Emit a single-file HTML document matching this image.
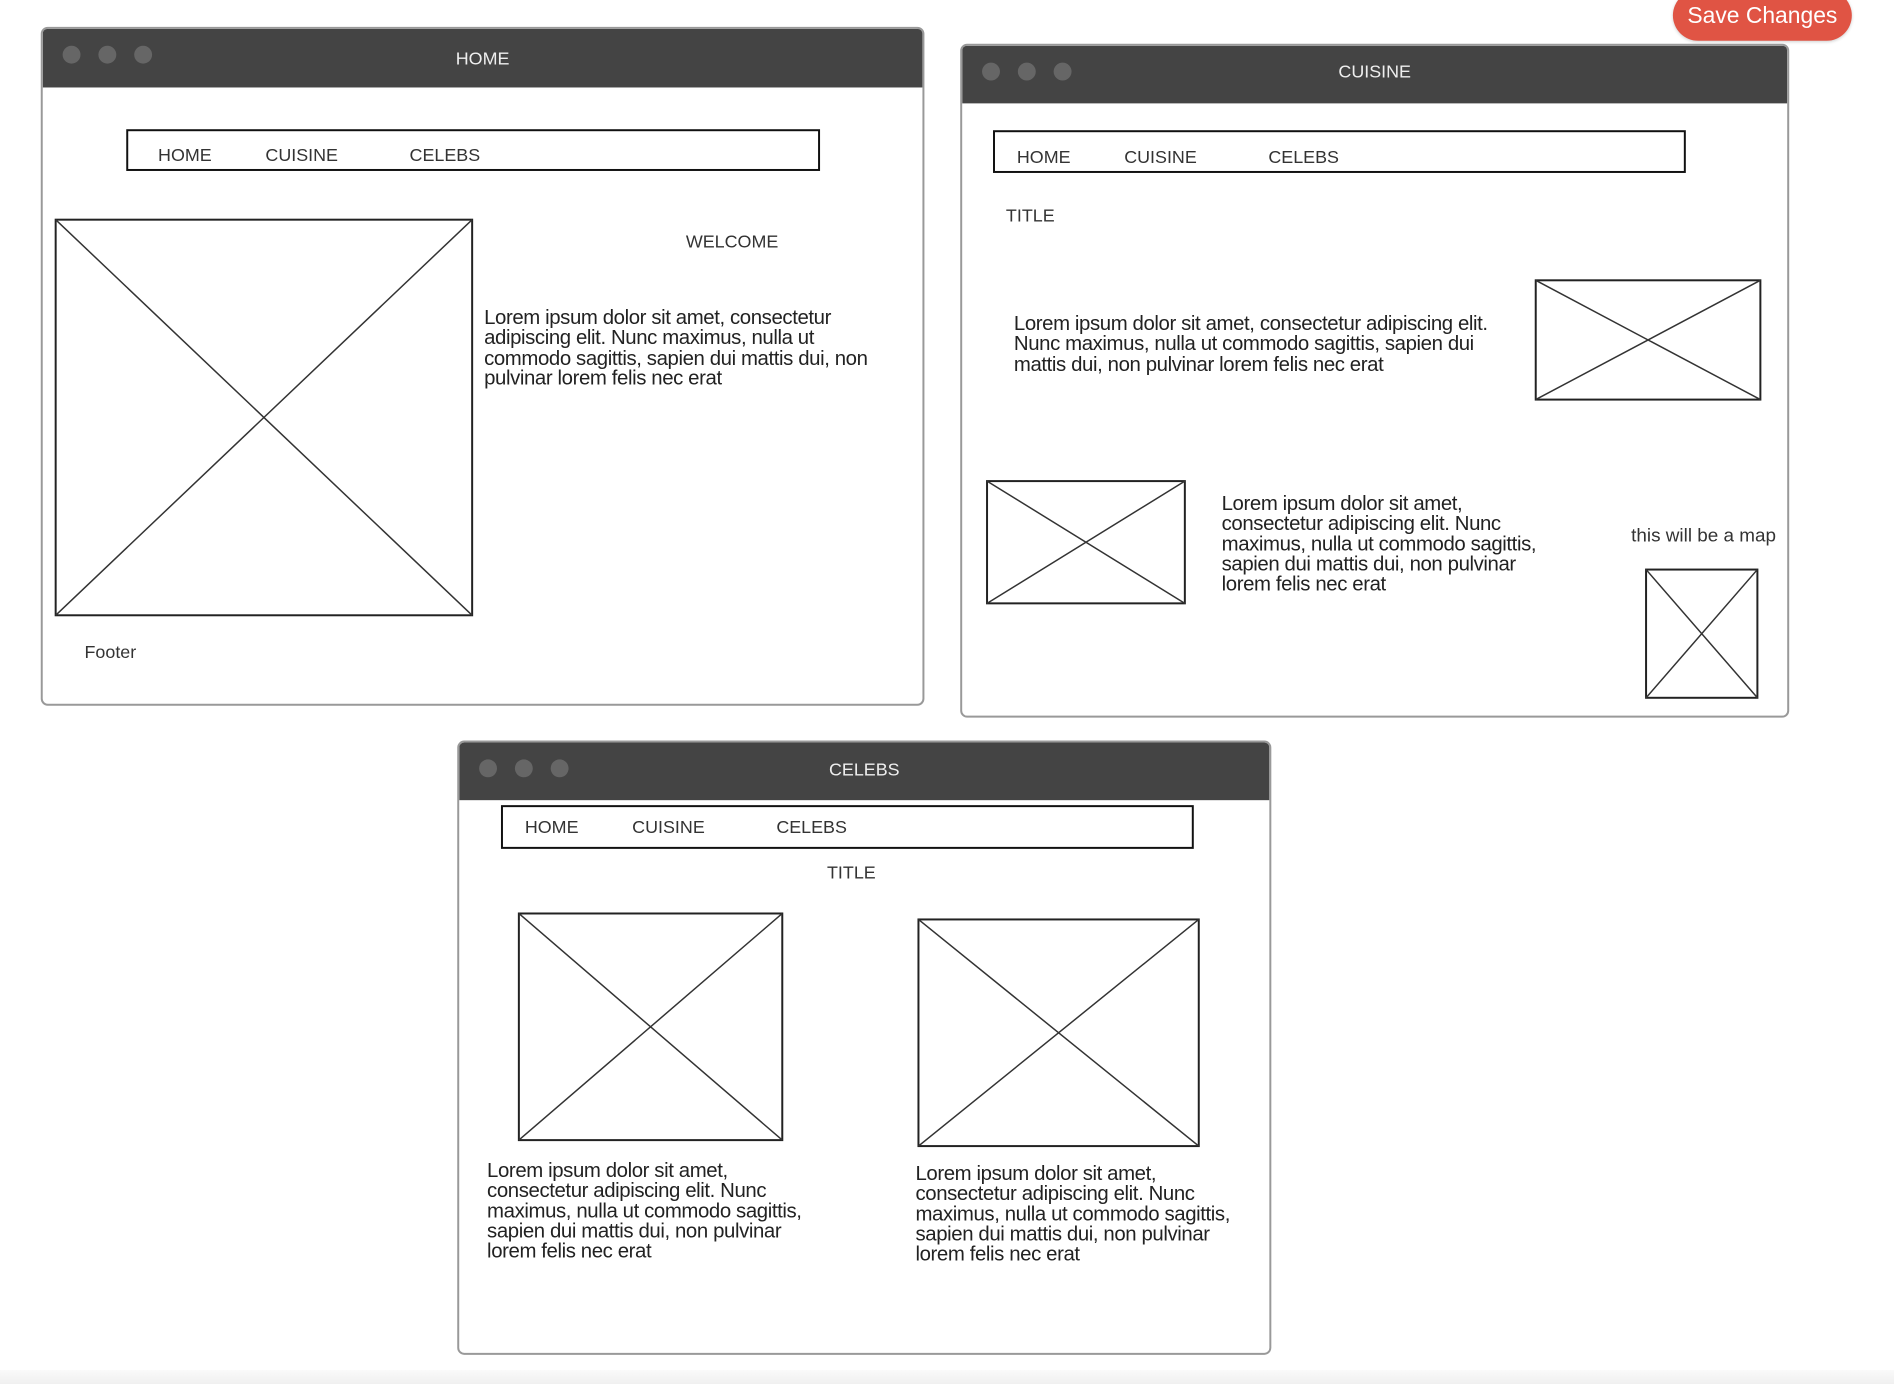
<!DOCTYPE html>
<html><head><meta charset="utf-8"><style>
*{margin:0;padding:0;box-sizing:border-box}
body{width:1894px;height:1384px;background:#fff;position:relative;overflow:hidden;font-family:"Liberation Sans",sans-serif;color:#333}
#w{position:absolute;left:0;top:0;width:1894px;height:1384px;transform:scale(0.994);transform-origin:0 0}
.win{position:absolute;border:2px solid #999;border-radius:7px;background:#fff;overflow:hidden}
.bar{position:absolute;left:0;top:0;right:0;background:#444;color:#eee;font-size:18px;text-align:center}
.dot{position:absolute;width:18px;height:18px;border-radius:50%;background:#666}
.nav{position:absolute;border:2.5px solid #111}
.n{position:absolute;font-size:18px;white-space:nowrap}
svg.x{position:absolute;overflow:visible}
.p{position:absolute;font-size:20.5px;line-height:20.3px;white-space:nowrap;letter-spacing:-0.4px;color:#222}
</style></head><body>
<div id="w">
<div style="position:absolute;left:1683px;top:-10px;width:180px;height:51px;border-radius:26px;background:#e05444;color:#fff;font-size:23px;text-align:center;line-height:52px;padding-top:6px;box-shadow:0 1px 3px rgba(0,0,0,.2)"><span style="position:relative;top:-7px">Save Changes</span></div>

<!-- HOME -->
<div class="win" style="left:41px;top:27px;width:889px;height:683px">
 <div class="bar" style="height:59px;line-height:60px">HOME</div>
 <div class="dot" style="left:20px;top:17px"></div><div class="dot" style="left:56px;top:17px"></div><div class="dot" style="left:92px;top:17px"></div>
</div>
<div class="nav" style="left:127px;top:130px;width:698px;height:42px"></div>
<div class="n" style="left:159px;top:146px">HOME</div>
<div class="n" style="left:267px;top:146px">CUISINE</div>
<div class="n" style="left:412px;top:146px">CELEBS</div>
<svg class="x" style="left:56px;top:221px" width="419" height="398"><rect x="0" y="0" width="419" height="398" fill="none" stroke="#222" stroke-width="2"/><path d="M0 0L419 398M419 0L0 398" stroke="#333" stroke-width="1.5"/></svg>
<div class="n" style="left:690px;top:233px">WELCOME</div>
<div class="p" style="left:487px;top:310px">Lorem ipsum dolor sit amet, consectetur<br>adipiscing elit. Nunc maximus, nulla ut<br>commodo sagittis, sapien dui mattis dui, non<br>pulvinar lorem felis nec erat</div>
<div class="n" style="left:85px;top:646px">Footer</div>

<!-- CUISINE -->
<div class="win" style="left:966px;top:44px;width:834px;height:678px">
 <div class="bar" style="height:58px;line-height:52px">CUISINE</div>
 <div class="dot" style="left:20px;top:17px"></div><div class="dot" style="left:56px;top:17px"></div><div class="dot" style="left:92px;top:17px"></div>
</div>
<div class="nav" style="left:999px;top:131px;width:697px;height:43px"></div>
<div class="n" style="left:1023px;top:148px">HOME</div>
<div class="n" style="left:1131px;top:148px">CUISINE</div>
<div class="n" style="left:1276px;top:148px">CELEBS</div>
<div class="n" style="left:1012px;top:207px">TITLE</div>
<div class="p" style="left:1020px;top:316px">Lorem ipsum dolor sit amet, consectetur adipiscing elit.<br>Nunc maximus, nulla ut commodo sagittis, sapien dui<br>mattis dui, non pulvinar lorem felis nec erat</div>
<svg class="x" style="left:1545px;top:282px" width="226" height="120"><rect x="0" y="0" width="226" height="120" fill="none" stroke="#222" stroke-width="2"/><path d="M0 0L226 120M226 0L0 120" stroke="#333" stroke-width="1.5"/></svg>
<svg class="x" style="left:993px;top:484px" width="199" height="123"><rect x="0" y="0" width="199" height="123" fill="none" stroke="#222" stroke-width="2"/><path d="M0 0L199 123M199 0L0 123" stroke="#333" stroke-width="1.5"/></svg>
<div class="p" style="left:1229px;top:497px">Lorem ipsum dolor sit amet,<br>consectetur adipiscing elit. Nunc<br>maximus, nulla ut commodo sagittis,<br>sapien dui mattis dui, non pulvinar<br>lorem felis nec erat</div>
<div class="n" style="left:1641px;top:529px;font-size:19px">this will be a map</div>
<svg class="x" style="left:1656px;top:573px" width="112" height="129"><rect x="0" y="0" width="112" height="129" fill="none" stroke="#222" stroke-width="2"/><path d="M0 0L112 129M112 0L0 129" stroke="#333" stroke-width="1.5"/></svg>

<!-- CELEBS -->
<div class="win" style="left:460px;top:745px;width:819px;height:618px">
 <div class="bar" style="height:58px;line-height:54px">CELEBS</div>
 <div class="dot" style="left:20px;top:17px"></div><div class="dot" style="left:56px;top:17px"></div><div class="dot" style="left:92px;top:17px"></div>
</div>
<div class="nav" style="left:504px;top:810px;width:697px;height:44px"></div>
<div class="n" style="left:528px;top:822px">HOME</div>
<div class="n" style="left:636px;top:822px">CUISINE</div>
<div class="n" style="left:781px;top:822px">CELEBS</div>
<div class="n" style="left:832px;top:868px">TITLE</div>
<svg class="x" style="left:522px;top:919px" width="265" height="228"><rect x="0" y="0" width="265" height="228" fill="none" stroke="#222" stroke-width="2"/><path d="M0 0L265 228M265 0L0 228" stroke="#333" stroke-width="1.5"/></svg>
<svg class="x" style="left:924px;top:925px" width="282" height="228"><rect x="0" y="0" width="282" height="228" fill="none" stroke="#222" stroke-width="2"/><path d="M0 0L282 228M282 0L0 228" stroke="#333" stroke-width="1.5"/></svg>
<div class="p" style="left:490px;top:1168px">Lorem ipsum dolor sit amet,<br>consectetur adipiscing elit. Nunc<br>maximus, nulla ut commodo sagittis,<br>sapien dui mattis dui, non pulvinar<br>lorem felis nec erat</div>
<div class="p" style="left:921px;top:1171px">Lorem ipsum dolor sit amet,<br>consectetur adipiscing elit. Nunc<br>maximus, nulla ut commodo sagittis,<br>sapien dui mattis dui, non pulvinar<br>lorem felis nec erat</div>
</div>
<div style="position:absolute;left:0;right:0;bottom:0;height:14px;background:linear-gradient(#fafafa,#f0f0f0)"></div>
</body></html>
